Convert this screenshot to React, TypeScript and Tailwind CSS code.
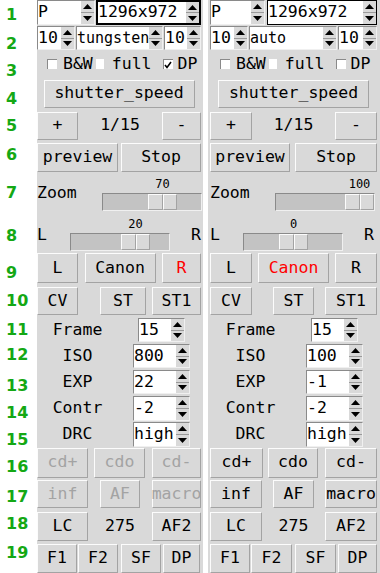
import type { ReactNode } from "react";

const MONO = "font-['DejaVu_Sans_Mono',monospace]";

const raised =
  "border border-t-[#fcfcfc] border-l-[#fcfcfc] border-r-[#a3a3a3] border-b-[#a3a3a3]";
const sunken =
  "border border-t-[#8a8a8a] border-l-[#8a8a8a] border-r-[#f0f0f0] border-b-[#f0f0f0]";

const numbers = [
  { n: "1", cls: "mt-[6.5px]" },
  { n: "2", cls: "mt-[13.5px]" },
  { n: "3", cls: "mt-[11px]" },
  { n: "4", cls: "mt-[11.5px]" },
  { n: "5", cls: "mt-[11.5px]" },
  { n: "6", cls: "mt-[13px]" },
  { n: "7", cls: "mt-[21.5px]" },
  { n: "8", cls: "mt-[27.5px]" },
  { n: "9", cls: "mt-[21px]" },
  { n: "10", cls: "mt-[12px]" },
  { n: "11", cls: "mt-[13px]" },
  { n: "12", cls: "mt-[9px]" },
  { n: "13", cls: "mt-[15px]" },
  { n: "14", cls: "mt-[11px]" },
  { n: "15", cls: "mt-[11px]" },
  { n: "16", cls: "mt-[11px]" },
  { n: "17", cls: "mt-[14px]" },
  { n: "18", cls: "mt-[11px]" },
  { n: "19", cls: "mt-[12.5px]" },
];

function Numbers() {
  return (
    <div className="flex w-[37px] shrink-0 flex-col pl-[6px] font-['DejaVu_Sans',sans-serif] text-[16px] leading-[16px] font-bold text-[#14a814]">
      {numbers.map((r) => (
        <div key={r.n} className={`h-[16px] ${r.cls}`}>
          {r.n}
        </div>
      ))}
    </div>
  );
}

function Btn({
  label,
  className = "",
  dim,
  red,
}: {
  label: string;
  className?: string;
  dim?: boolean;
  red?: boolean;
}) {
  const color = dim ? "text-[#a3a3a3]" : red ? "text-[#ff0000]" : "text-black";
  return (
    <div
      className={`flex shrink-0 items-center justify-center whitespace-nowrap bg-[#d9d9d9] text-[16.5px] leading-none ${raised} ${color} ${className}`}
    >
      {label}
    </div>
  );
}

function Arrows() {
  return (
    <div className="flex w-[13px] shrink-0 flex-col bg-[#d9d9d9]">
      <div className="flex flex-1 items-center justify-center border-b border-[#9a9a9a]">
        <svg width="9" height="5" viewBox="0 0 9 5">
          <path d="M4.5 0L9 5H0z" fill="#000" />
        </svg>
      </div>
      <div className="flex flex-1 items-center justify-center">
        <svg width="9" height="5" viewBox="0 0 9 5">
          <path d="M0 0h9L4.5 5z" fill="#000" />
        </svg>
      </div>
    </div>
  );
}

function Spin({
  value,
  className = "",
  focus,
  text = "text-[16.5px]",
}: {
  value: string;
  className?: string;
  focus?: string;
  text?: string;
}) {
  return (
    <div className={`flex shrink-0 bg-white ${focus ?? sunken} ${className}`}>
      <div
        className={`flex min-w-0 flex-1 items-center overflow-hidden whitespace-nowrap leading-none ${text}`}
      >
        {value}
      </div>
      <Arrows />
    </div>
  );
}

function Box({ checked }: { checked?: boolean }) {
  return (
    <div className="flex h-[10px] w-[10px] shrink-0 items-center justify-center border-t border-l border-[#8a8a8a] bg-white">
      {checked ? (
        <svg width="8" height="8" viewBox="0 0 8 8">
          <path d="M1 4l2 2.5L7 1" fill="none" stroke="#000" strokeWidth="1.6" />
        </svg>
      ) : null}
    </div>
  );
}

function Scale({ value, thumb }: { value: string; thumb: number }) {
  return (
    <div className="flex w-[100px] shrink-0 flex-col">
      <div className="flex h-[19px] items-center text-[12px] leading-none">
        <div className="w-[29px] text-center" style={{ marginLeft: thumb + 1 }}>
          {value}
        </div>
      </div>
      <div className={`relative h-[18px] bg-[#c3c3c3] ${sunken}`}>
        <div className="absolute top-0 bottom-0 flex w-[29px]" style={{ left: thumb }}>
          <div className={`flex-1 bg-[#d9d9d9] ${raised}`} />
          <div className={`flex-1 bg-[#d9d9d9] ${raised}`} />
        </div>
      </div>
    </div>
  );
}

function Field({ label, children }: { label: string; children: ReactNode }) {
  return (
    <div className="flex h-[26px] items-center">
      <div className="w-[81px] text-center text-[16.5px] leading-none">{label}</div>
      {children}
    </div>
  );
}

function Panel({ b }: { b?: boolean }) {
  return (
    <div
      className={`flex shrink-0 flex-col bg-[#d9d9d9] text-black ${MONO} ${
        b ? "w-[172px] pl-[2px] pr-[3px]" : "w-[166px] pr-[2px]"
      }`}
    >
      {/* 1 */}
      <div className="flex h-[25px] justify-between">
        <Spin value="P" className={b ? "w-[55px]" : "w-[58px]"} />
        <Spin
          value="1296x972"
          focus={b ? "border border-black" : "border-2 border-black"}
          className={b ? "w-[110px]" : "w-[105px]"}
        />
      </div>
      {/* 2 */}
      <div className="flex h-[26px] items-center justify-between">
        <Spin value="10" className="h-[24px] w-[38px]" />
        <Spin
          value={b ? "auto" : "tungsten"}
          text="text-[15px]"
          className={`h-[24px] ${b ? "w-[88px]" : "w-[87px]"}`}
        />
        <Spin value="10" className={`h-[24px] ${b ? "w-[39px]" : "w-[37px]"}`} />
      </div>
      {/* 3 */}
      <div className="flex h-[26px] items-center pl-[10px] text-[16.5px] leading-none">
        <Box />
        <span className="ml-[6px]">B&amp;W</span>
        <div className="ml-[3px] h-[10px] w-[8px] shrink-0 bg-white" />
        <span className="ml-[8px]">full</span>
        <div className="ml-[11px]">
          <Box checked={!b} />
        </div>
        <span className="ml-[5px]">DP</span>
      </div>
      {/* 4 */}
      <div className="flex h-[33px] items-center justify-center">
        <Btn label="shutter_speed" className="h-[28px] w-[151px]" />
      </div>
      {/* 5 */}
      <div className="flex h-[31px] items-center">
        <Btn label="+" className={`h-[28px] ${b ? "w-[42px]" : "w-[41px]"}`} />
        <div className="flex-1 text-center text-[16.5px] leading-none">1/15</div>
        <Btn label="-" className={`h-[28px] ${b ? "w-[42px]" : "w-[39px]"}`} />
      </div>
      {/* 6 */}
      <div className="flex h-[33px] items-center justify-between">
        <Btn label="preview" className={`h-[29px] ${b ? "w-[80px]" : "w-[81px]"}`} />
        <Btn label="Stop" className={`h-[29px] ${b ? "w-[82px]" : "w-[80px]"}`} />
      </div>
      {/* 7 */}
      <div className="flex h-[40px]">
        <div className="w-[65px] shrink-0 pt-[9px] text-[16.5px] leading-[20px]">Zoom</div>
        <Scale value={b ? "100" : "70"} thumb={b ? 69 : 45} />
      </div>
      {/* 8 */}
      <div className="flex h-[37px]">
        <div className="w-[33px] shrink-0 pt-[11px] text-[16.5px] leading-[20px]">L</div>
        <Scale value={b ? "0" : "20"} thumb={b ? 35 : 50} />
        <div className="ml-[21px] pt-[11px] text-[16.5px] leading-[20px]">R</div>
      </div>
      {/* 9 */}
      <div className="flex h-[34px] items-center justify-between">
        <Btn label="L" className={`h-[30px] ${b ? "w-[42px]" : "w-[41px]"}`} />
        <Btn label="Canon" red={b} className="h-[30px] w-[71px]" />
        <Btn label="R" red={!b} className={`h-[30px] ${b ? "w-[42px]" : "w-[39px]"}`} />
      </div>
      {/* 10 */}
      <div className="flex h-[32px] items-center">
        <Btn label="CV" className={`h-[28px] ${b ? "w-[42px]" : "w-[41px]"}`} />
        <Btn
          label="ST"
          className={`h-[28px] ${b ? "ml-[21px] w-[41px]" : "ml-[22px] w-[46px]"}`}
        />
        <Btn label="ST1" className={`ml-auto h-[28px] ${b ? "w-[52px]" : "w-[49px]"}`} />
      </div>
      {/* 11-15 */}
      <Field label="Frame">
        <Spin value="15" className="ml-[20px] h-[24px] w-[47px]" />
      </Field>
      <Field label="ISO">
        <Spin value={b ? "100" : "800"} className="ml-[15px] h-[24px] w-[57px]" />
      </Field>
      <Field label="EXP">
        <Spin value={b ? "-1" : "22"} className="ml-[15px] h-[24px] w-[57px]" />
      </Field>
      <Field label="Contr">
        <Spin value="-2" className="ml-[15px] h-[25px] w-[57px]" />
      </Field>
      <Field label="DRC">
        <Spin value="high" className="ml-[15px] h-[25px] w-[57px]" />
      </Field>
      {/* 16 */}
      <div className="flex h-[31px] items-center">
        <Btn label="cd+" dim={!b} className={`h-[30px] ${b ? "w-[53px]" : "w-[51px]"}`} />
        <Btn
          label="cdo"
          dim={!b}
          className={`h-[30px] ${b ? "ml-[5px] w-[50px]" : "ml-[6px] w-[51px]"}`}
        />
        <Btn
          label="cd-"
          dim={!b}
          className={`ml-auto h-[30px] ${b ? "w-[52px]" : "w-[49px]"}`}
        />
      </div>
      {/* 17 */}
      <div className="flex h-[32px] items-center">
        <Btn label="inf" dim={!b} className={`h-[28px] ${b ? "w-[52px]" : "w-[51px]"}`} />
        <Btn
          label="AF"
          dim={!b}
          className={`h-[28px] ${b ? "ml-[11px] w-[41px]" : "ml-[12px] w-[40px]"}`}
        />
        <Btn
          label="macro"
          dim={!b}
          className={`ml-auto h-[28px] ${b ? "w-[52px]" : "w-[49px]"}`}
        />
      </div>
      {/* 18 */}
      <div className="flex h-[32px] items-center">
        <Btn label="LC" className={`h-[29px] ${b ? "w-[52px]" : "w-[51px]"}`} />
        <div className="flex-1 text-center text-[16.5px] leading-none">275</div>
        <Btn label="AF2" className={`h-[29px] ${b ? "w-[52px]" : "w-[49px]"}`} />
      </div>
      {/* 19 */}
      <div className="flex h-[31px] items-end">
        <Btn label="F1" className="h-[29px] w-[40px]" />
        <Btn label="F2" className={`ml-[1px] h-[29px] ${b ? "w-[41px]" : "w-[40px]"}`} />
        <Btn label="SF" className={`ml-[3px] h-[29px] ${b ? "w-[41px]" : "w-[40px]"}`} />
        <Btn label="DP" className={`ml-[2px] h-[29px] ${b ? "w-[39px]" : "w-[37px]"}`} />
      </div>
    </div>
  );
}

export default function App() {
  return (
    <div className="flex h-[573px] w-[380px] overflow-hidden bg-white">
      <Numbers />
      <Panel />
      <div className="w-[5px] shrink-0" />
      <Panel b />
    </div>
  );
}
